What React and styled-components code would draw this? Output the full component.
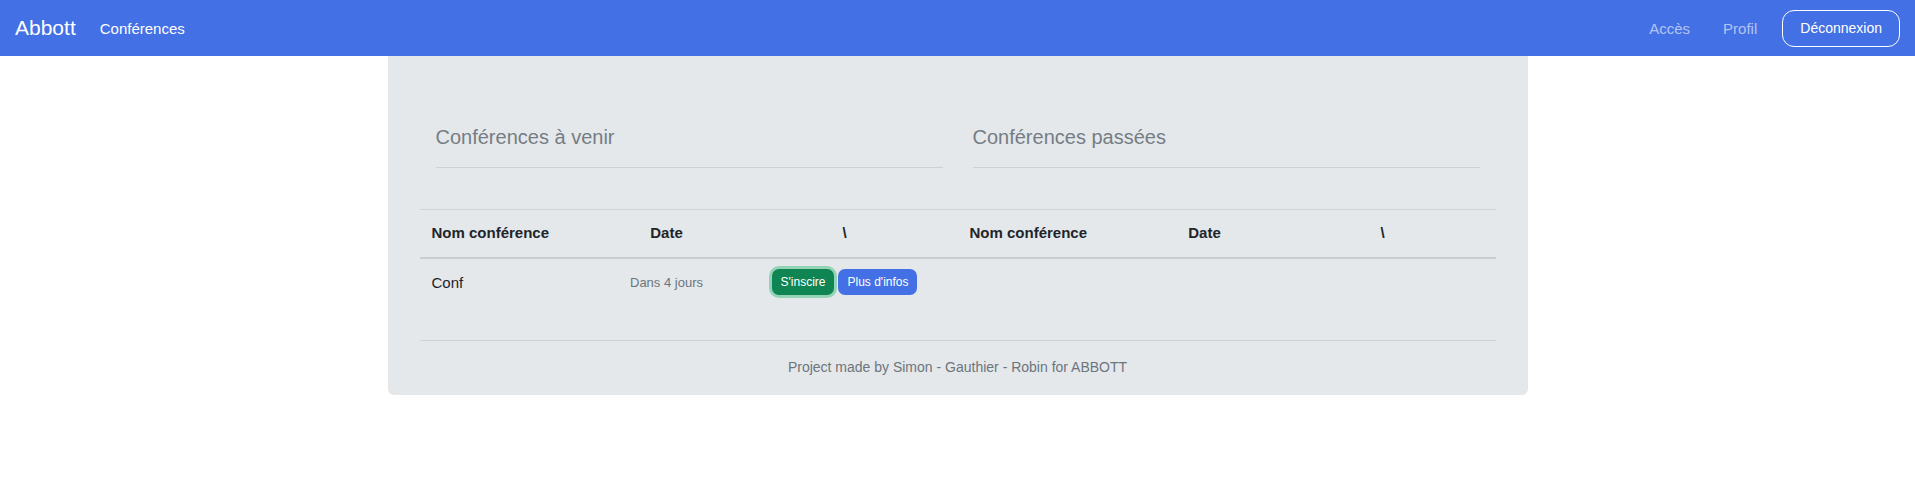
import styled, { createGlobalStyle } from "styled-components";

// Page-wide reset: no body margin, sans font
const GlobalStyle = createGlobalStyle`
  body {
    margin: 0;
    font-family: "Liberation Sans", Arial, sans-serif;
    color: #212529;
    background: #ffffff;
  }
  * { box-sizing: border-box; }
`;

const Navbar = styled.nav`
  height: 56px;
  background: #4370e4;
  display: flex;
  align-items: center;
  padding: 0 15px;
`;

const Brand = styled.span`
  font-size: 21px;
  color: #ffffff;
  margin-right: 24px;
`;

const NavLink = styled.span`
  font-size: 15px;
  color: ${(props) => (props.muted ? "rgba(255, 255, 255, 0.6)" : "#ffffff")};
`;

const NavRight = styled.div`
  margin-left: auto;
  display: flex;
  align-items: center;
  gap: 33px;
`;

const LogoutButton = styled.button`
  margin-left: -8px;
  height: 37px;
  padding: 0 17px;
  border: 1px solid #ffffff;
  border-radius: 12px;
  background: transparent;
  color: #ffffff;
  font-family: inherit;
  font-size: 14px;
`;

// Main grey card in the middle of the page
const Card = styled.main`
  width: 1140px;
  margin: 0 auto;
  background: #e4e8eb;
  border-radius: 0 0 6px 6px;
  padding: 0 32px 17px;
`;

const HeadingRow = styled.div`
  display: grid;
  grid-template-columns: 1fr 1fr;
  gap: 30px;
  padding: 69px 16px 0;
`;

const Heading = styled.h2`
  margin: 0;
  font-size: 20px;
  font-weight: 400;
  line-height: 24px;
  color: #767d84;
  padding-bottom: 18px;
  border-bottom: 1px solid #cdd1d5;
`;

const Tables = styled.div`
  display: grid;
  grid-template-columns: 1fr 1fr;
  margin-top: 41px;
`;

const Table = styled.table`
  width: 100%;
  border-collapse: collapse;
  table-layout: fixed;
`;

const Th = styled.th`
  width: ${(props) => props.w}px;
  height: 48px;
  padding: 0 12px 2px;
  font-size: 15px;
  font-weight: 700;
  color: #212529;
  text-align: ${(props) => (props.center ? "center" : "left")};
  border-top: 1px solid #cfd3d7;
  border-bottom: 2px solid #c9cdd1;
`;

const Td = styled.td`
  height: 48px;
  padding: 0 12px;
  font-size: ${(props) => (props.small ? "13px" : "15px")};
  color: ${(props) => (props.small ? "#6c757d" : "#212529")};
  text-align: ${(props) => (props.center ? "center" : "left")};
`;

const ActionButton = styled.button`
  font-family: inherit;
  font-size: 12px;
  line-height: 16px;
  padding: 5px 9px;
  border: none;
  border-radius: 7px;
  color: #ffffff;
  background: ${(props) => (props.variant === "success" ? "#0e8553" : "#4370e4")};
  box-shadow: ${(props) => (props.variant === "success" ? "0 0 0 3px #93d3b6" : "none")};
  margin: 0 2px;
`;

const Footer = styled.footer`
  margin-top: 34px;
  border-top: 1px solid #cdd1d5;
  padding-top: 16px;
  text-align: center;
  font-size: 14px;
  line-height: 21px;
  color: #6c757d;
`;

const columns = [
  { label: "Nom conférence", w: 182 },
  { label: "Date", w: 130, center: true },
  { label: "\\", w: 226, center: true },
];

const upcoming = [{ id: 1, name: "Conf", when: "Dans 4 jours" }];

const ConfTable = ({ rows }) => (
  <Table>
    <thead>
      <tr>
        {columns.map((c) => (
          <Th key={c.label} w={c.w} center={c.center}>
            {c.label}
          </Th>
        ))}
      </tr>
    </thead>
    <tbody>
      {rows.map((r) => (
        <tr key={r.id}>
          <Td>{r.name}</Td>
          <Td small center>
            {r.when}
          </Td>
          <Td center>
            <ActionButton variant="success">S'inscire</ActionButton>
            <ActionButton>Plus d'infos</ActionButton>
          </Td>
        </tr>
      ))}
    </tbody>
  </Table>
);

const App = () => (
  <>
    <GlobalStyle />
    <Navbar>
      <Brand>Abbott</Brand>
      <NavLink>Conférences</NavLink>
      <NavRight>
        <NavLink muted>Accès</NavLink>
        <NavLink muted>Profil</NavLink>
        <LogoutButton>Déconnexion</LogoutButton>
      </NavRight>
    </Navbar>
    <Card>
      <HeadingRow>
        <Heading>Conférences à venir</Heading>
        <Heading>Conférences passées</Heading>
      </HeadingRow>
      <Tables>
        <ConfTable rows={upcoming} />
        <ConfTable rows={[]} />
      </Tables>
      <Footer>Project made by Simon - Gauthier - Robin for ABBOTT</Footer>
    </Card>
  </>
);

export default App;
